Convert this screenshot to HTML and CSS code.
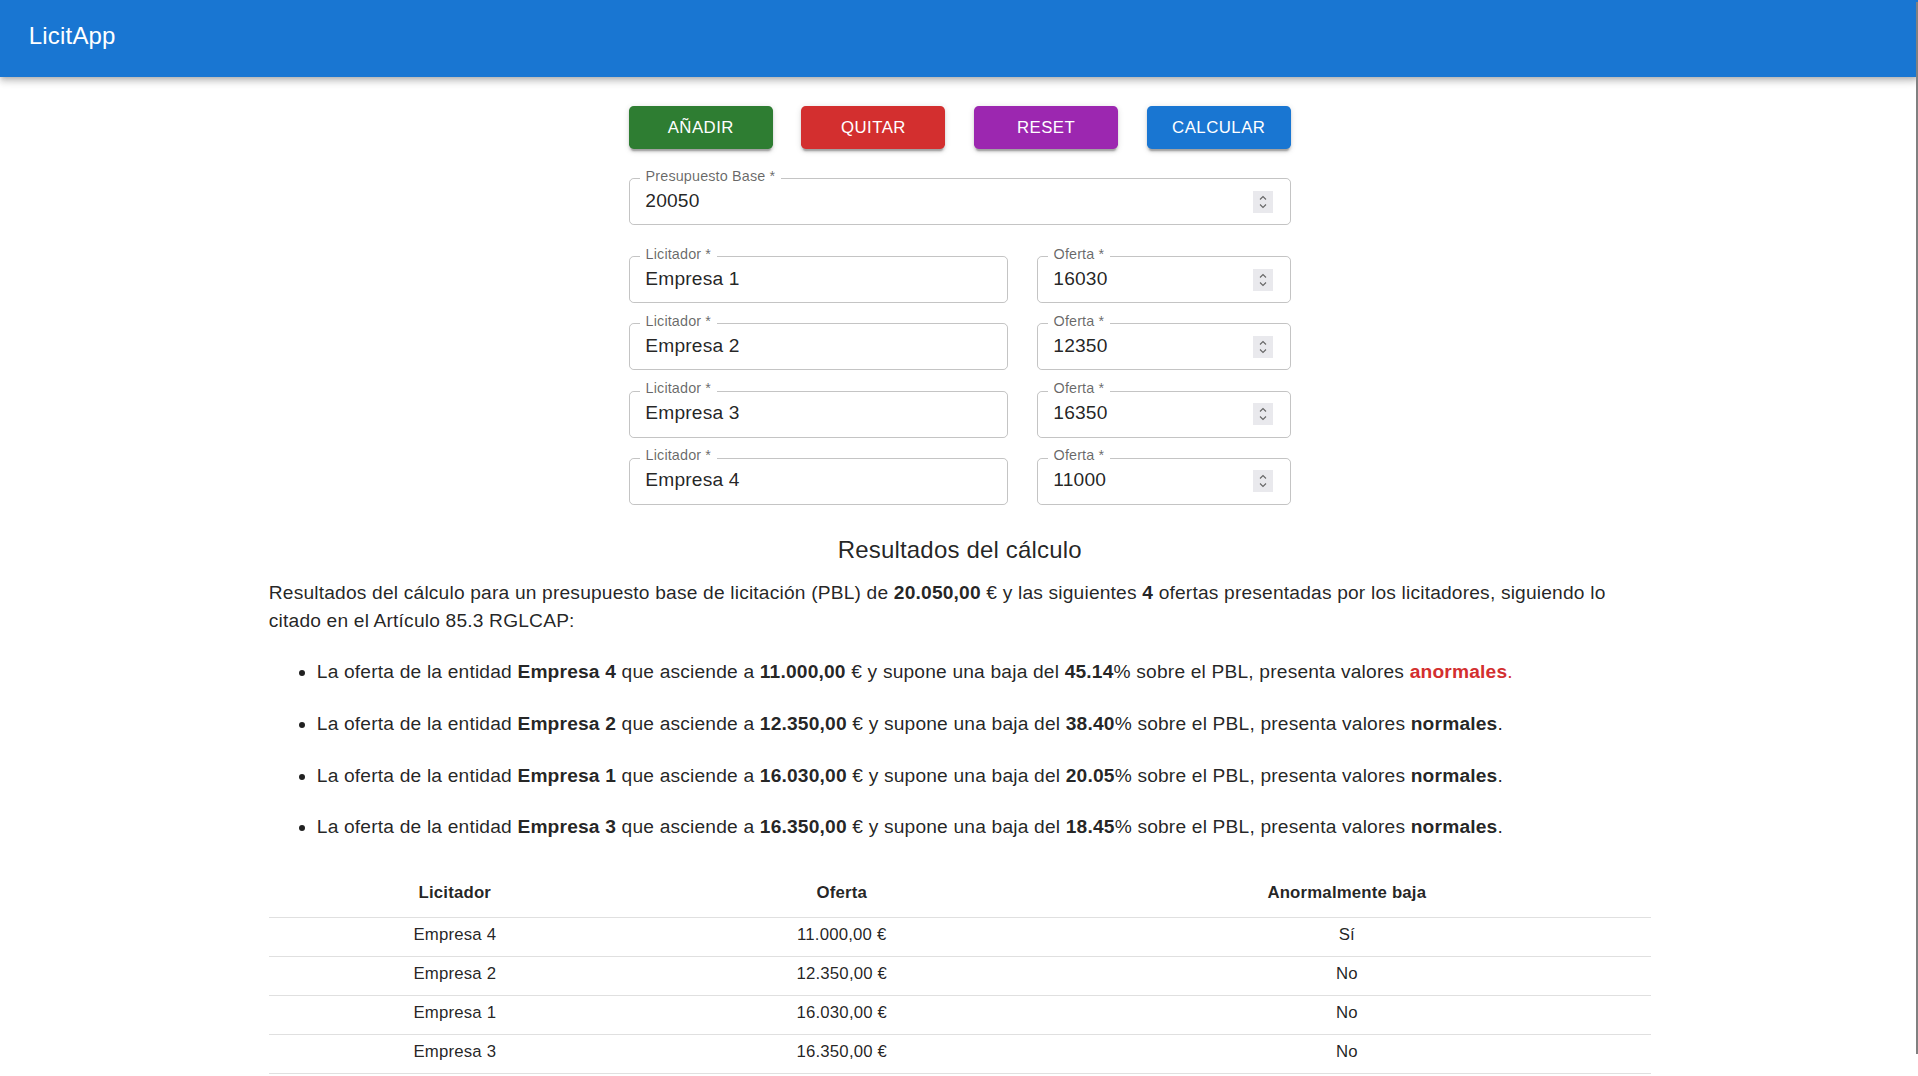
FILE: index.html
```html
<!DOCTYPE html>
<html lang="es">
<head>
<meta charset="utf-8">
<title>LicitApp</title>
<link rel="stylesheet" href="styles.css">
</head>
<body>
<header class="appbar">
  <div class="brand">LicitApp</div>
</header>

<main class="container">
  <section class="form">
    <div class="actions">
      <button class="btn btn-green">Añadir</button>
      <button class="btn btn-red">Quitar</button>
      <button class="btn btn-purple">Reset</button>
      <button class="btn btn-blue">Calcular</button>
    </div>

    <div class="field field-base">
      <label class="field-label">Presupuesto Base *</label>
      <span class="field-value">20050</span>
      <svg class="spin" width="20" height="22" viewBox="0 0 20 22"><rect width="20" height="22" fill="#e9e9ed"/><polyline points="7,8.5 10,5.5 13,8.5" fill="none" stroke="#666" stroke-width="1.1"/><polyline points="7,13.5 10,16.5 13,13.5" fill="none" stroke="#666" stroke-width="1.1"/></svg>
    </div>

    <div class="rows">
      <div class="row">
        <div class="field field-name"><label class="field-label">Licitador *</label><span class="field-value">Empresa 1</span></div>
        <div class="field field-offer"><label class="field-label">Oferta *</label><span class="field-value">16030</span>
          <svg class="spin" width="20" height="22" viewBox="0 0 20 22"><rect width="20" height="22" fill="#e9e9ed"/><polyline points="7,8.5 10,5.5 13,8.5" fill="none" stroke="#666" stroke-width="1.1"/><polyline points="7,13.5 10,16.5 13,13.5" fill="none" stroke="#666" stroke-width="1.1"/></svg></div>
      </div>
      <div class="row">
        <div class="field field-name"><label class="field-label">Licitador *</label><span class="field-value">Empresa 2</span></div>
        <div class="field field-offer"><label class="field-label">Oferta *</label><span class="field-value">12350</span>
          <svg class="spin" width="20" height="22" viewBox="0 0 20 22"><rect width="20" height="22" fill="#e9e9ed"/><polyline points="7,8.5 10,5.5 13,8.5" fill="none" stroke="#666" stroke-width="1.1"/><polyline points="7,13.5 10,16.5 13,13.5" fill="none" stroke="#666" stroke-width="1.1"/></svg></div>
      </div>
      <div class="row">
        <div class="field field-name"><label class="field-label">Licitador *</label><span class="field-value">Empresa 3</span></div>
        <div class="field field-offer"><label class="field-label">Oferta *</label><span class="field-value">16350</span>
          <svg class="spin" width="20" height="22" viewBox="0 0 20 22"><rect width="20" height="22" fill="#e9e9ed"/><polyline points="7,8.5 10,5.5 13,8.5" fill="none" stroke="#666" stroke-width="1.1"/><polyline points="7,13.5 10,16.5 13,13.5" fill="none" stroke="#666" stroke-width="1.1"/></svg></div>
      </div>
      <div class="row">
        <div class="field field-name"><label class="field-label">Licitador *</label><span class="field-value">Empresa 4</span></div>
        <div class="field field-offer"><label class="field-label">Oferta *</label><span class="field-value">11000</span>
          <svg class="spin" width="20" height="22" viewBox="0 0 20 22"><rect width="20" height="22" fill="#e9e9ed"/><polyline points="7,8.5 10,5.5 13,8.5" fill="none" stroke="#666" stroke-width="1.1"/><polyline points="7,13.5 10,16.5 13,13.5" fill="none" stroke="#666" stroke-width="1.1"/></svg></div>
      </div>
    </div>
  </section>

  <h2 class="results-title">Resultados del cálculo</h2>
  <p class="results-intro">Resultados del cálculo para un presupuesto base de licitación (PBL) de <b>20.050,00</b> € y las siguientes <b>4</b> ofertas presentadas por los licitadores, siguiendo lo citado en el Artículo 85.3 RGLCAP:</p>

  <ul class="results-list">
    <li>La oferta de la entidad <b>Empresa 4</b> que asciende a <b>11.000,00</b> € y supone una baja del <b>45.14</b>% sobre el PBL, presenta valores <span class="abnormal"><b>anormales</b>.</span></li>
    <li>La oferta de la entidad <b>Empresa 2</b> que asciende a <b>12.350,00</b> € y supone una baja del <b>38.40</b>% sobre el PBL, presenta valores <b>normales</b>.</li>
    <li>La oferta de la entidad <b>Empresa 1</b> que asciende a <b>16.030,00</b> € y supone una baja del <b>20.05</b>% sobre el PBL, presenta valores <b>normales</b>.</li>
    <li>La oferta de la entidad <b>Empresa 3</b> que asciende a <b>16.350,00</b> € y supone una baja del <b>18.45</b>% sobre el PBL, presenta valores <b>normales</b>.</li>
  </ul>

  <table class="results-table">
    <colgroup><col class="c1"><col class="c2"><col class="c3"></colgroup>
    <thead>
      <tr><th>Licitador</th><th>Oferta</th><th>Anormalmente baja</th></tr>
    </thead>
    <tbody>
      <tr><td>Empresa 4</td><td>11.000,00 €</td><td>Sí</td></tr>
      <tr><td>Empresa 2</td><td>12.350,00 €</td><td>No</td></tr>
      <tr><td>Empresa 1</td><td>16.030,00 €</td><td>No</td></tr>
      <tr><td>Empresa 3</td><td>16.350,00 €</td><td>No</td></tr>
    </tbody>
  </table>
</main>

<div class="scroll-thumb"></div>
</body>
</html>
```

FILE: styles.css
```css
* { box-sizing: border-box; }

html, body {
  margin: 0;
  padding: 0;
  background: #ffffff;
}

body {
  font-family: "Liberation Sans", Arial, Helvetica, sans-serif;
  color: rgba(0, 0, 0, 0.87);
  font-size: 19.2px;
  line-height: 1.5;
  letter-spacing: 0.18px;
}

.appbar {
  height: 77px;
  background: #1976d2;
  color: #ffffff;
  padding: 24px 0 0 28.8px;
  box-shadow: 0 2.4px 4.8px -1.2px rgba(0,0,0,0.2), 0 4.8px 6px 0 rgba(0,0,0,0.14), 0 1.2px 12px 0 rgba(0,0,0,0.12);
  position: relative;
  z-index: 2;
}

.brand {
  font-size: 24px;
  line-height: 24px;
  font-weight: 400;
  letter-spacing: 0.18px;
}

.container {
  width: 1382px;
  margin: 0 0 0 calc((100% - 1382px) / 2 + 0.8px);
}

.form {
  width: 662px;
  margin: 0 auto;
  padding-top: 29px;
}

.actions {
  display: flex;
  justify-content: space-between;
}

.btn {
  width: 144px;
  height: 43px;
  border: 0;
  border-radius: 4.8px;
  color: #ffffff;
  font-family: "Liberation Sans", Arial, sans-serif;
  font-size: 16.8px;
  font-weight: 400;
  letter-spacing: 0.48px;
  text-transform: uppercase;
  padding: 0;
  box-shadow: 0 3.6px 1.2px -2.4px rgba(0,0,0,0.2), 0 2.4px 2.4px 0 rgba(0,0,0,0.14), 0 1.2px 6px 0 rgba(0,0,0,0.12);
}

.btn-green { background: #2e7d32; }
.btn-red { background: #d32f2f; }
.btn-purple { background: #9c27b0; }
.btn-blue { background: #1976d2; }

.field {
  position: relative;
  height: 47px;
  border: 1px solid rgba(0, 0, 0, 0.23);
  border-radius: 4.8px;
  display: flex;
  align-items: center;
  justify-content: space-between;
  padding: 0 17px 2px 15.5px;
}

.field-base {
  margin-top: 29px;
}

.field-label {
  position: absolute;
  left: 10px;
  top: -10.5px;
  padding: 0 5.8px;
  background: #ffffff;
  font-size: 14.4px;
  line-height: 14.4px;
  letter-spacing: 0.135px;
  color: rgba(0, 0, 0, 0.6);
  white-space: nowrap;
}

.field-value {
  font-size: 19.2px;
  line-height: 24px;
  color: rgba(0, 0, 0, 0.87);
}

.spin {
  display: block;
  flex: none;
  margin-top: 2px;
}

.rows {
  margin-top: 31px;
  display: flex;
  flex-direction: column;
  gap: 20.33px;
}

.row {
  display: flex;
  justify-content: space-between;
}

.field-name { width: 379px; }
.field-offer { width: 254px; }

.results-title {
  margin: 25.8px 0 0;
  font-size: 24px;
  line-height: 38.4px;
  font-weight: 400;
  text-align: center;
}

.results-intro {
  margin: 9.4px 0 0;
  font-size: 19.2px;
  line-height: 28.8px;
}

.results-list {
  margin: 22px 0 0;
  padding-left: 48px;
  font-size: 19.2px;
  line-height: 28.8px;
}

.results-list li {
  margin-bottom: 22.9px;
}

.results-list li:last-child {
  margin-bottom: 0;
}

.abnormal {
  color: #d32f2f;
}

.results-table {
  width: 100%;
  margin-top: 31.5px;
  border-collapse: collapse;
  table-layout: fixed;
  font-size: 16.8px;
  line-height: 24px;
}

.c1 { width: 372px; }
.c2 { width: 402px; }
.c3 { width: 608px; }

.results-table th {
  font-weight: 700;
  text-align: center;
  padding: 7.2px 19.2px 12.4px;
  border-bottom: 1.2px solid #e0e0e0;
}

.results-table td {
  text-align: center;
  padding: 4.6px 19.2px 9.5px;
  border-bottom: 1.2px solid #e0e0e0;
}

.scroll-thumb {
  position: fixed;
  top: 2px;
  right: 0;
  width: 2px;
  height: 1052px;
  background: #808080;
  z-index: 5;
}
```
